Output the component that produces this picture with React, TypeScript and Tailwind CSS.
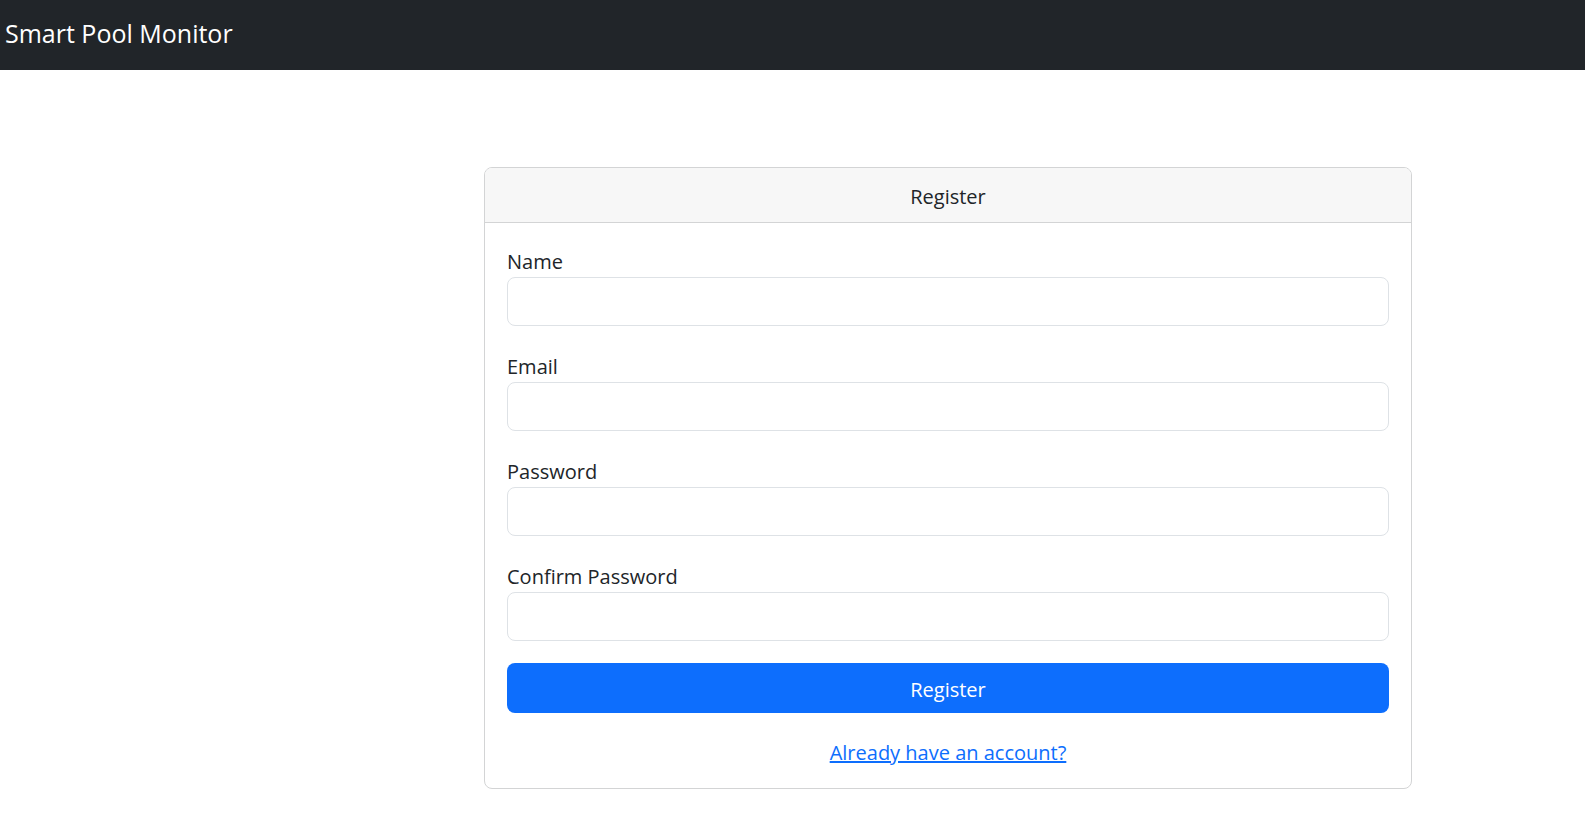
import React, { useState } from "react";

const fields = [
  { id: "name", label: "Name", type: "text" },
  { id: "email", label: "Email", type: "email" },
  { id: "password", label: "Password", type: "password" },
  { id: "confirm", label: "Confirm Password", type: "password" },
];

const App: React.FC = () => {
  const [values, setValues] = useState<Record<string, string>>({});

  const handleChange = (id: string, value: string) => {
    setValues((prev) => ({ ...prev, [id]: value }));
  };

  return (
    <div
      className="min-h-screen bg-white text-[#212529]"
      style={{ fontFamily: '"Open Sans", "Noto Sans", sans-serif' }}
    >
      <nav className="h-[70px] bg-[#212529] flex items-center px-[5px] pb-[4px]">
        <span className="text-white text-[25px] leading-none">
          Smart Pool Monitor
        </span>
      </nav>

      <main className="pt-[97px] pl-[484px]">
        <div className="w-[928px] border border-[#d3d4d5] rounded-[8px] overflow-hidden">
          <div className="h-[55px] bg-[#f7f7f7] border-b border-[#d3d4d5] flex items-center justify-center text-[20px] pt-[4px]">
            Register
          </div>
          <form
            className="px-[22px] pt-[20px] pb-[20px] flex flex-col"
            onSubmit={(e) => e.preventDefault()}
          >
            {fields.map((field) => (
              <div key={field.id} className="mb-[22px]">
                <label
                  htmlFor={field.id}
                  className="block text-[20px] leading-[30px] pt-[4px]"
                >
                  {field.label}
                </label>
                <input
                  id={field.id}
                  type={field.type}
                  value={values[field.id] || ""}
                  onChange={(e) => handleChange(field.id, e.target.value)}
                  className="block w-full h-[49px] border border-[#dee2e6] rounded-[8px] px-[15px] text-[20px] outline-none"
                />
              </div>
            ))}
            <button
              type="submit"
              className="h-[50px] w-full bg-[#0d6efd] text-white text-[20px] rounded-[8px] pt-[3px]"
            >
              Register
            </button>
            <div className="mt-[25px] text-center text-[20px] leading-[30px]">
              <a href="#" className="text-[#0d6efd] underline">
                Already have an account?
              </a>
            </div>
          </form>
        </div>
      </main>
    </div>
  );
};

export default App;
